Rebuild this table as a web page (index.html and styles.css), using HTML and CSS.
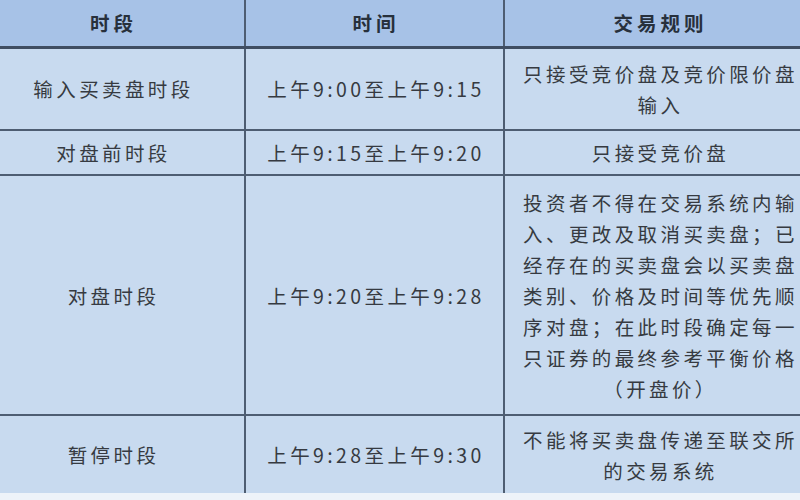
FILE: index.html
```html
<!DOCTYPE html>
<html lang="zh-CN">
<head>
<meta charset="utf-8">
<title>交易时段</title>
<link rel="stylesheet" href="styles.css">
</head>
<body>
<div class="page">
  <table class="sched">
    <colgroup>
      <col class="c1"><col class="c2"><col class="c3">
    </colgroup>
    <thead>
      <tr class="head">
        <th>时段</th>
        <th>时间</th>
        <th>交易规则</th>
      </tr>
    </thead>
    <tbody>
      <tr class="r1">
        <td>输入买卖盘时段</td>
        <td>上午9:00至上午9:15</td>
        <td class="rule">只接受竞价盘及竞价限价盘输入</td>
      </tr>
      <tr class="r2">
        <td>对盘前时段</td>
        <td>上午9:15至上午9:20</td>
        <td class="rule">只接受竞价盘</td>
      </tr>
      <tr class="r3">
        <td>对盘时段</td>
        <td>上午9:20至上午9:28</td>
        <td class="rule">投资者不得在交易系统内输入、更改及取消买卖盘；已经存在的买卖盘会以买卖盘类别、价格及时间等优先顺序对盘；在此时段确定每一只证券的最终参考平衡价格（开盘价）</td>
      </tr>
      <tr class="r4">
        <td>暂停时段</td>
        <td>上午9:28至上午9:30</td>
        <td class="rule">不能将买卖盘传递至联交所的交易系统</td>
      </tr>
    </tbody>
  </table>
</div>
</body>
</html>
```

FILE: styles.css
```css
html, body {
  margin: 0;
  padding: 0;
}
body {
  width: 800px;
  height: 500px;
  overflow: hidden;
  background: #eef3f9;
  font-family: "Noto Sans CJK SC", "Noto Sans", sans-serif;
}
.page {
  margin-left: -20px;
}
.sched {
  width: 833px;
  border-collapse: collapse;
  table-layout: fixed;
  color: #363a41;
}
.c1 { width: 265px; }
.c2 { width: 259px; }
.c3 { width: 309px; }

.sched th,
.sched td {
  padding: 0 14px 0 17px;
  text-align: center;
  vertical-align: middle;
  font-size: 19.5px;
  line-height: 31px;
  letter-spacing: 3.4px;
  border-left: 2px solid #4e5d72;
  border-bottom: 2px solid #4e5d72;
  background: #c8daef;
}
.sched th:first-child,
.sched td:first-child {
  border-left: none;
}
.sched th {
  background: #a7c2e7;
  font-weight: bold;
  color: #27303c;
  border-bottom: 3px solid #3f4d62;
  letter-spacing: 4px;
}
.head { height: 47px; }
.r1 { height: 83px; }
.r2 { height: 45px; }
.r3 { height: 240px; }
.r4 { height: 78px; }
.sched tr.r4 td {
  border-bottom: none;
}
.rule {
  word-break: break-all;
}
```
